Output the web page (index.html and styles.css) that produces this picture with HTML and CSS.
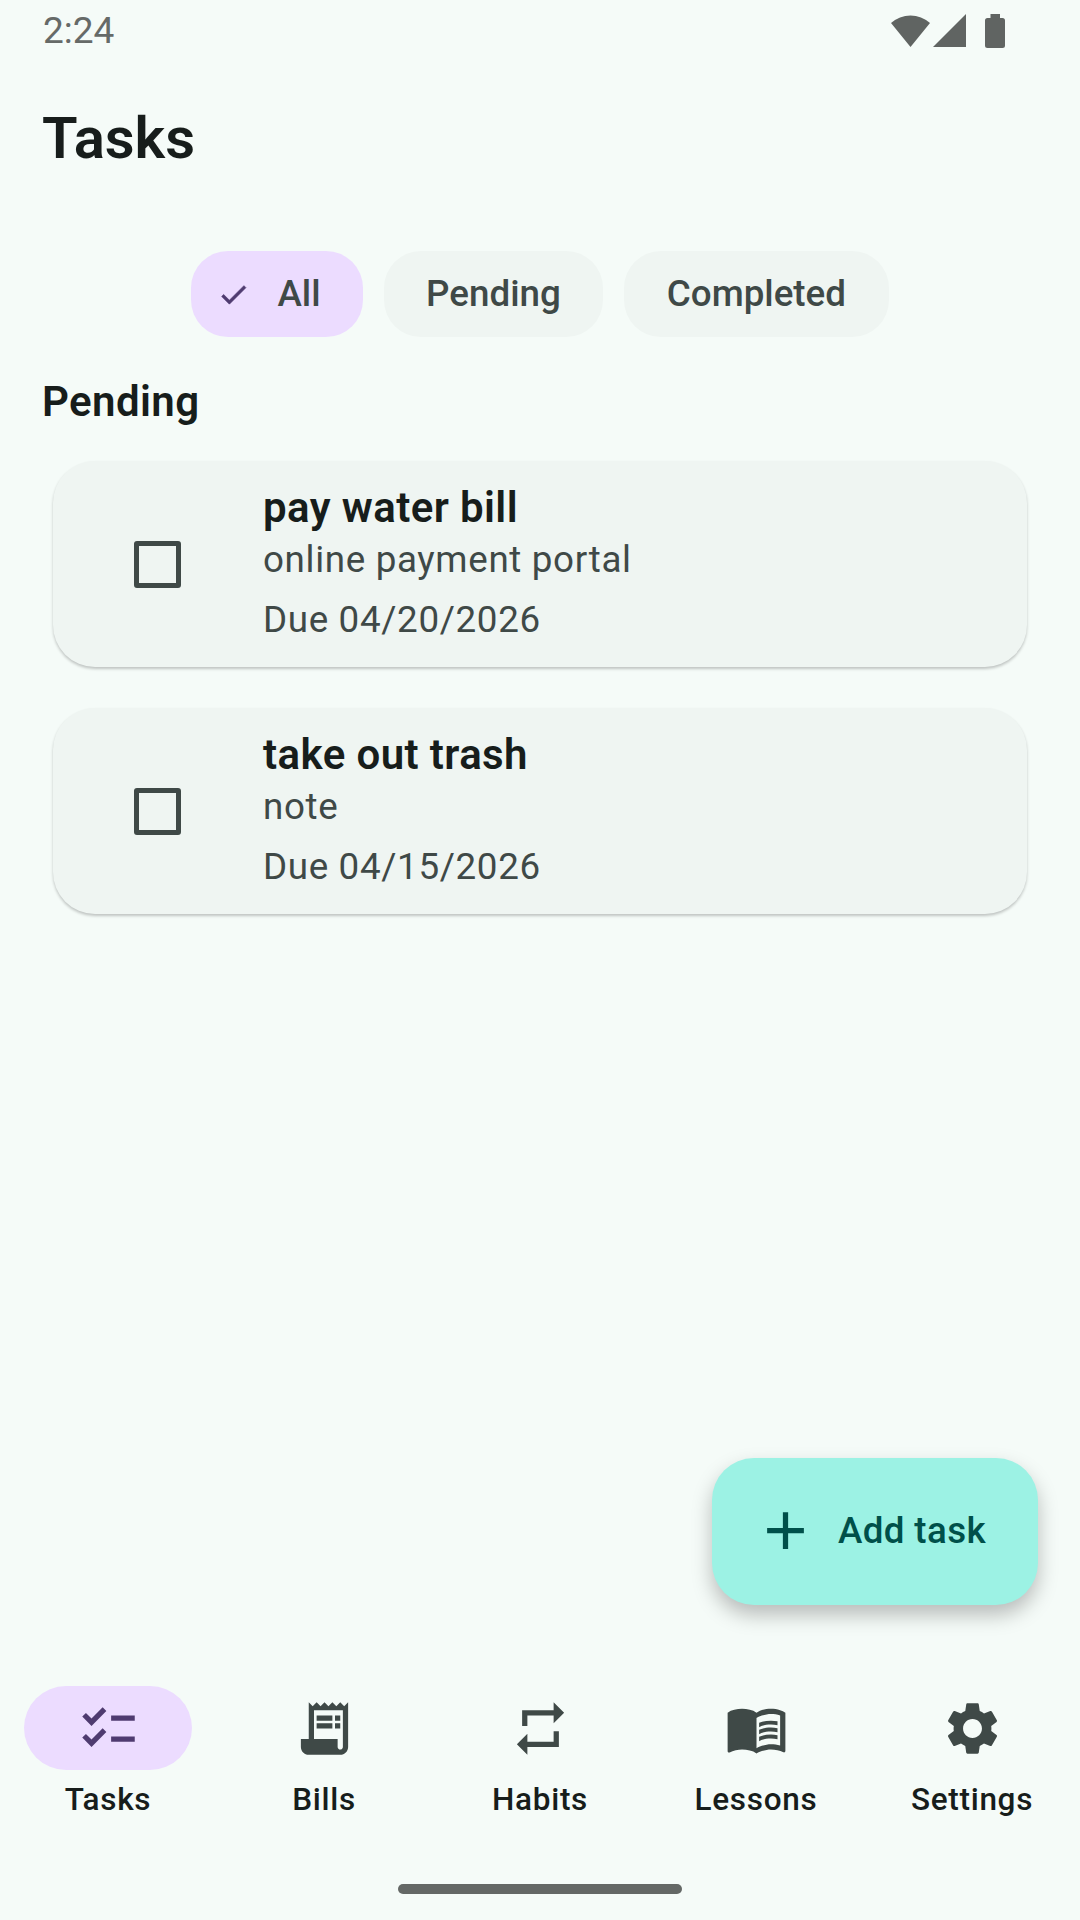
FILE: index.html
```html
<!DOCTYPE html>
<html lang="en">
<head>
<meta charset="utf-8">
<title>Tasks</title>
<link rel="stylesheet" href="styles.css">
</head>
<body>
<div class="page">
  <header class="status">
    <span class="time">2:24</span>
    <div class="status-icons">
      <svg class="st-wifi" viewBox="0 0 39 33"><path d="M0 9A29 29 0 0 1 39 9L19.5 33Z"/></svg>
      <svg class="st-signal" viewBox="0 0 33 33"><path d="M33 0V33H0Z"/></svg>
      <svg class="st-battery" viewBox="0 0 20 34"><path d="M5.5 0H15V4H17.5A2.5 2.5 0 0 1 20 6.500V31.500A2.500 2.500 0 0 1 17.500 34H2.500A2.500 2.500 0 0 1 0 31.500V6.500A2.500 2.500 0 0 1 2.500 4H5.500Z"/></svg>
    </div>
  </header>

  <h1 class="title">Tasks</h1>

  <div class="chips">
    <div class="chip chip-on">
      <svg class="chip-check" viewBox="0 0 24 24"><path d="M9 16.170 4.830 12l-1.420 1.410L9 19 21 7l-1.410-1.410z"/></svg>
      <span>All</span>
    </div>
    <div class="chip"><span>Pending</span></div>
    <div class="chip"><span>Completed</span></div>
  </div>

  <h2 class="section">Pending</h2>

  <div class="cards">
    <article class="card">
      <div class="box"></div>
      <div class="card-text">
        <div class="card-title">pay water bill</div>
        <div class="card-note">online payment portal</div>
        <div class="card-due">Due 04/20/2026</div>
      </div>
    </article>
    <article class="card">
      <div class="box"></div>
      <div class="card-text">
        <div class="card-title">take out trash</div>
        <div class="card-note">note</div>
        <div class="card-due">Due 04/15/2026</div>
      </div>
    </article>
  </div>

  <button class="fab">
    <svg class="fab-icon" viewBox="0 0 24 24"><path d="M19 13h-6v6h-2v-6H5v-2h6V5h2v6h6v2z"/></svg>
    <span>Add task</span>
  </button>

  <nav class="nav">
    <div class="nav-item">
      <div class="nav-pill nav-pill-on">
        <svg class="nav-icon nav-icon-on" viewBox="0 0 24 24"><path d="M22 7h-9v2h9V7zM22 15h-9v2h9v-2zM5.540 11 2 7.460l1.410-1.410 2.120 2.120 4.240-4.240 1.410 1.410L5.540 11zM5.540 19 2 15.460l1.410-1.410 2.120 2.120 4.240-4.240 1.410 1.410L5.540 19z"/></svg>
      </div>
      <span class="nav-label">Tasks</span>
    </div>
    <div class="nav-item">
      <div class="nav-pill">
        <svg class="nav-icon" viewBox="0 0 24 24"><path d="M19.500 3.500 18 2l-1.500 1.500L15 2l-1.500 1.500L12 2l-1.500 1.500L9 2 7.500 3.500 6 2v14H3v3c0 1.660 1.340 3 3 3h12c1.660 0 3-1.340 3-3V2l-1.500 1.500zM19 19c0 .55-.45 1-1 1s-1-.45-1-1v-3H8V5h11v14z"/><path d="M9 7h6v2H9zM16 7h2v2h-2zM9 10h6v2H9zM16 10h2v2h-2z"/></svg>
      </div>
      <span class="nav-label">Bills</span>
    </div>
    <div class="nav-item">
      <div class="nav-pill">
        <svg class="nav-icon" viewBox="0 0 24 24"><path d="M7 7h10v3l4-4-4-4v3H5v6h2V7zm10 10H7v-3l-4 4 4 4v-3h12v-6h-2v4z"/></svg>
      </div>
      <span class="nav-label">Habits</span>
    </div>
    <div class="nav-item">
      <div class="nav-pill">
        <svg class="nav-icon" viewBox="0 0 24 24"><path d="M21 5c-1.110-.35-2.330-.5-3.500-.5-1.950 0-4.050.4-5.500 1.500-1.450-1.100-3.550-1.500-5.500-1.500S2.450 4.900 1 6v14.650c0 .25.25.5.5.5.1 0 .15-.05.25-.05C3.100 20.450 5.050 20 6.500 20c1.950 0 4.050.4 5.500 1.500 1.350-.85 3.800-1.500 5.500-1.500 1.650 0 3.350.3 4.750 1.050.1.05.15.05.25.05.25 0 .5-.25.5-.5V6c-.6-.45-1.250-.75-2-1zm0 13.500c-1.100-.35-2.300-.5-3.500-.5-1.700 0-4.150.65-5.500 1.500V8c1.350-.85 3.800-1.500 5.500-1.500 1.200 0 2.400.15 3.500.5v11.500z"/><path d="M17.500 10.500c.88 0 1.730.09 2.500.26V9.240c-.79-.15-1.640-.24-2.500-.24-1.700 0-3.240.29-4.500.83v1.660c1.130-.64 2.700-.99 4.500-.99zM13 12.490v1.660c1.130-.64 2.700-.99 4.500-.99.88 0 1.730.09 2.500.26V11.900c-.79-.15-1.640-.24-2.500-.24-1.700 0-3.240.3-4.500.83zM17.500 14.330c-1.700 0-3.240.29-4.500.83v1.660c1.130-.64 2.700-.99 4.500-.99.88 0 1.730.09 2.500.26v-1.520c-.79-.16-1.640-.24-2.500-.24z"/></svg>
      </div>
      <span class="nav-label">Lessons</span>
    </div>
    <div class="nav-item">
      <div class="nav-pill">
        <svg class="nav-icon" viewBox="0 0 24 24"><path d="M19.140 12.940c.04-.3.06-.61.06-.94 0-.32-.02-.64-.07-.94l2.030-1.580c.18-.14.23-.41.12-.61l-1.920-3.320c-.12-.22-.37-.29-.59-.22l-2.390.96c-.5-.38-1.030-.7-1.620-.94l-.36-2.540c-.04-.24-.24-.41-.48-.41h-3.840c-.24 0-.43.17-.47.41l-.36 2.540c-.59.24-1.130.57-1.620.94l-2.390-.96c-.22-.08-.47 0-.59.22L2.740 8.870c-.12.21-.08.47.12.61l2.030 1.580c-.05.3-.09.63-.09.94s.02.64.07.94l-2.030 1.580c-.18.14-.23.41-.12.61l1.920 3.320c.12.22.37.29.59.22l2.390-.96c.5.38 1.030.7 1.620.94l.36 2.540c.05.24.24.41.48.41h3.840c.24 0 .44-.17.47-.41l.36-2.540c.59-.24 1.130-.56 1.620-.94l2.390.96c.22.08.47 0 .59-.22l1.920-3.320c.12-.22.07-.47-.12-.61l-2.010-1.580zM12 15.600c-1.980 0-3.600-1.620-3.600-3.600s1.620-3.600 3.600-3.600 3.600 1.620 3.600 3.600-1.620 3.600-3.600 3.600z"/></svg>
      </div>
      <span class="nav-label">Settings</span>
    </div>
  </nav>

  <div class="home-row"><div class="home-bar"></div></div>
</div>
</body>
</html>
```

FILE: styles.css
```css
* { box-sizing: border-box; }

html, body {
  margin: 0;
  padding: 0;
  background: #f5fbf8;
}

body {
  font-family: Roboto, "Noto Sans", sans-serif;
  color: #171d1b;
}

.page {
  position: relative;
  width: 1080px;
  height: 1920px;
  display: flex;
  flex-direction: column;
  overflow: hidden;
}

/* status bar */
.status {
  height: 60px;
  padding: 9px 75px 0 43px;
  display: flex;
  justify-content: space-between;
  align-items: flex-start;
}

.time {
  font-size: 37px;
  line-height: 44px;
  color: #666a68;
}

.status-icons {
  display: flex;
  align-items: flex-start;
  padding-top: 5px;
  gap: 3px;
}

.status-icons svg { fill: #606462; display: block; }
.st-wifi { width: 39px; height: 33px; }
.st-signal { width: 33px; height: 33px; }
.st-battery { width: 20px; height: 34px; margin-left: 16px; }

/* headings */
.title {
  margin: 42px 0 0 42px;
  font-size: 58px;
  line-height: 72px;
  font-weight: 600;
}

.chips {
  margin-top: 77px;
  height: 86px;
  display: flex;
  justify-content: center;
  gap: 21px;
}

.chip {
  height: 86px;
  padding: 0 42.500px 2px;
  border-radius: 37px;
  background: #eff5f2;
  color: #3f4947;
  font-size: 36.750px;
  font-weight: 500;
  display: flex;
  align-items: center;
}

.chip-on {
  background: #ecdcff;
  padding-left: 26px;
  padding-right: 42px;
  gap: 27px;
}

.chip-check {
  width: 33px;
  height: 33px;
  fill: #4f3b70;
  stroke: #4f3b70;
  stroke-width: 0.5;
  margin-top: 2px;
}

.section {
  margin: 38px 0 0 42px;
  font-size: 42px;
  line-height: 54px;
  font-weight: 600;
  letter-spacing: 0.400px;
}

/* cards */
.cards {
  margin: 32px 53px 0;
  display: flex;
  flex-direction: column;
  gap: 41px;
}

.card {
  height: 206px;
  border-radius: 42px;
  background: #eff5f2;
  box-shadow: 0 2px 3px rgba(0, 0, 0, 0.22);
  display: flex;
  align-items: center;
  padding-left: 81px;
}

.box {
  width: 47px;
  height: 47px;
  border: 5px solid #3f4947;
  border-radius: 3px;
  flex: none;
}

.card-text {
  margin-left: 82px;
  display: flex;
  flex-direction: column;
}

.card-title {
  font-size: 42px;
  line-height: 54px;
  font-weight: 600;
  letter-spacing: 0.400px;
}

.card-note,
.card-due {
  font-size: 36.750px;
  letter-spacing: 0.660px;
  color: #3f4947;
}

.card-note { line-height: 50px; }
.card-due { line-height: 54px; margin-top: 8.500px; }

/* floating action button */
.fab {
  position: absolute;
  left: 712px;
  top: 1458px;
  width: 326px;
  height: 147px;
  border: 0;
  border-radius: 42px;
  background: #9cf2e4;
  color: #00504a;
  font-family: inherit;
  font-size: 36.750px;
  font-weight: 500;
  letter-spacing: 0.360px;
  box-shadow: 0 10px 20px rgba(0, 0, 0, 0.25);
  display: flex;
  align-items: center;
  padding: 0 0 2px 42px;
  gap: 21px;
}

.fab-icon {
  width: 63px;
  height: 63px;
  fill: #00504a;
}

/* bottom navigation */
.nav {
  margin-top: auto;
  display: flex;
}

.nav-item {
  width: 216px;
  display: flex;
  flex-direction: column;
  align-items: center;
}

.nav-pill {
  width: 168px;
  height: 84px;
  border-radius: 42px;
  display: flex;
  align-items: center;
  justify-content: center;
}

.nav-pill-on { background: #ecdcff; }

.nav-icon {
  width: 63px;
  height: 63px;
  fill: #3f4947;
}

.nav-icon-on { fill: #4f3b70; }

.nav-label {
  margin-top: 8px;
  font-size: 31.500px;
  line-height: 44px;
  font-weight: 500;
  letter-spacing: 0.700px;
}

.home-row {
  height: 98px;
  padding-top: 62px;
  display: flex;
  justify-content: center;
}

.home-bar {
  width: 284px;
  height: 10px;
  border-radius: 5px;
  background: #646866;
}
```
